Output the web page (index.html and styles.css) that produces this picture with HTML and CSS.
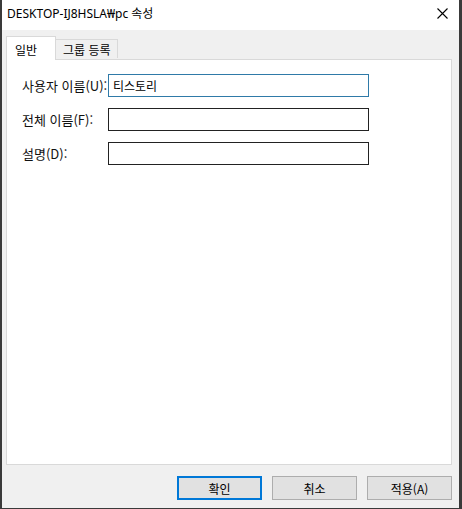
FILE: index.html
```html
<!DOCTYPE html>
<html lang="ko">
<head>
<meta charset="utf-8">
<title>DESKTOP-IJ8HSLA₩pc 속성</title>
<link rel="stylesheet" href="styles.css">
</head>
<body>
<div class="window">
  <div class="titlebar">
    <span class="title">DESKTOP-IJ8HSLA₩pc 속성</span>
    <span class="close">
      <svg width="11" height="11" viewBox="0 0 11 11"><path d="M0.5 0.5 L10.5 10.5 M10.5 0.5 L0.5 10.5" stroke="#000" stroke-width="1.1" fill="none"/></svg>
    </span>
  </div>
  <div class="client">
    <div class="tabs">
      <div class="tab selected">일반</div>
      <div class="tab">그룹 등록</div>
    </div>
    <div class="panel">
      <div class="form">
        <label class="label">사용자 이름(U):</label>
        <div class="input focused">티스토리</div>
        <label class="label">전체 이름(F):</label>
        <div class="input"></div>
        <label class="label">설명(D):</label>
        <div class="input"></div>
      </div>
    </div>
    <div class="buttons">
      <button class="btn default">확인</button>
      <button class="btn">취소</button>
      <button class="btn">적용(A)</button>
    </div>
  </div>
</div>
</body>
</html>
```

FILE: styles.css
```css
html, body {
  margin: 0;
  padding: 0;
  background: #ffffff;
}
body {
  width: 462px;
  height: 509px;
  overflow: hidden;
  font-family: "Noto Sans", "Noto Sans CJK KR", sans-serif;
  font-size: 12px;
  color: #000;
}
.window {
  box-sizing: border-box;
  width: 462px;
  height: 509px;
  border-left: 2px solid #3a3a3a;
  border-right: 3px solid #3a3a3a;
  border-bottom: 2px solid #3a3a3a;
  display: flex;
  flex-direction: column;
}
.titlebar {
  height: 30px;
  flex: none;
  background: #ffffff;
  display: flex;
  align-items: center;
  padding-left: 5px;
  padding-right: 11px;
}
.title {
  flex: 1;
  font-size: 12px;
  line-height: 16px;
  margin-top: -2px;
}
.close {
  display: flex;
  width: 11px;
  height: 11px;
  margin-top: -4px;
}
.client {
  flex: 1;
  background: #f0f0f0;
  display: flex;
  flex-direction: column;
  padding: 6px 7px 8px 4px;
}
.tabs {
  display: flex;
  align-items: flex-end;
  height: 23px;
  position: relative;
  z-index: 1;
}
.tab {
  box-sizing: border-box;
  height: 19px;
  padding: 0 6px;
  border: 1px solid #d9d9d9;
  border-bottom: none;
  background: #f0f0f0;
  display: flex;
  align-items: center;
  margin-bottom: 1px;
  font-family: "Noto Sans CJK KR", sans-serif;
  font-size: 12px;
}
.tab.selected {
  height: 24px;
  width: 50px;
  padding: 0 0 0 8px;
  background: #ffffff;
  border-color: #d9d9d9;
  margin-bottom: -1px;
  padding-top: 2px;
}
.tab + .tab {
  border-left: none;
  width: 62px;
  padding-left: 7px;
  padding-top: 1px;
}
.panel {
  box-sizing: border-box;
  height: 406px;
  flex: none;
  width: 446px;
  background: #ffffff;
  border: 1px solid #d9d9d9;
  padding: 14px 0 0 15px;
}
.form {
  display: grid;
  grid-template-columns: 86px 261px;
  grid-auto-rows: 23px;
  row-gap: 11px;
  align-items: center;
}
.label {
  font-family: "Noto Sans CJK KR", sans-serif;
  font-size: 13px;
  color: #111;
}
.input {
  box-sizing: border-box;
  height: 23px;
  border: 1px solid #222;
  background: #fff;
  padding-left: 4px;
  display: flex;
  align-items: center;
  font-family: "Noto Sans CJK KR", sans-serif;
  font-size: 12px;
}
.input.focused {
  border-color: #2f7aa8;
}
.buttons {
  display: flex;
  justify-content: flex-end;
  gap: 10px;
  margin-top: 11px;
}
.btn {
  box-sizing: border-box;
  width: 85px;
  height: 24px;
  background: #e1e1e1;
  border: 1px solid #adadad;
  font-family: "Noto Sans CJK KR", sans-serif;
  font-size: 12px;
  color: #000;
  padding: 0;
  margin: 0;
}
.btn.default {
  border: 2px solid #0078d7;
}
```
